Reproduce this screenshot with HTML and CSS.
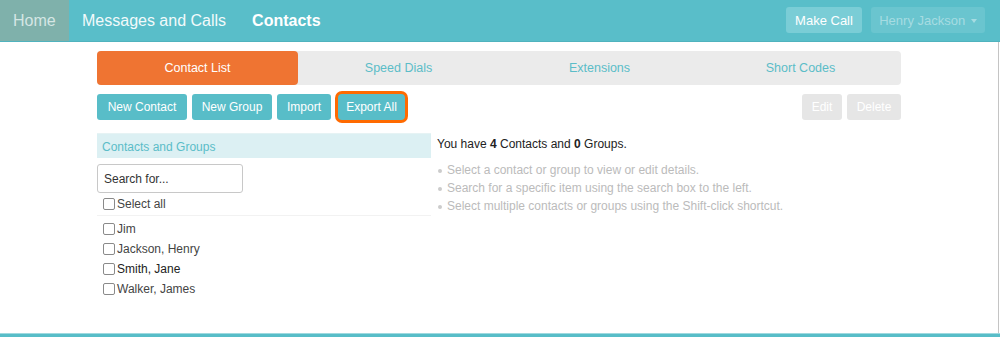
FILE: index.html
```html
<!DOCTYPE html>
<html>
<head>
<meta charset="utf-8">
<link rel="stylesheet" href="styles.css">
</head>
<body>
<header class="navbar">
  <a class="nav-home">Home</a>
  <a class="nav-link">Messages and Calls</a>
  <a class="nav-link nav-active">Contacts</a>
  <div class="nav-right">
    <button class="nav-btn nav-call">Make Call</button>
    <button class="nav-btn nav-user">Henry Jackson <span class="caret"></span></button>
  </div>
</header>
<div class="page">
  <main class="container">
    <nav class="tabs">
      <div class="tab tab-active">Contact List</div>
      <div class="tab">Speed Dials</div>
      <div class="tab">Extensions</div>
      <div class="tab">Short Codes</div>
    </nav>
    <div class="toolbar">
      <div class="tool-left">
        <button class="btn w-new-contact">New Contact</button>
        <button class="btn w-new-group">New Group</button>
        <button class="btn w-import">Import</button>
        <button class="btn btn-hl">Export All</button>
      </div>
      <div class="tool-right">
        <button class="btn btn-dis w-edit">Edit</button>
        <button class="btn btn-dis w-delete">Delete</button>
      </div>
    </div>
    <div class="cols">
      <section class="left">
        <div class="left-head">Contacts and Groups</div>
        <div class="search">Search for...</div>
        <label class="row select-all"><span class="cb"></span>Select all</label>
        <ul class="list">
          <li class="row"><span class="cb"></span>Jim</li>
          <li class="row"><span class="cb"></span>Jackson, Henry</li>
          <li class="row dark"><span class="cb"></span>Smith, Jane</li>
          <li class="row"><span class="cb"></span>Walker, James</li>
        </ul>
      </section>
      <section class="right">
        <p class="summary">You have <b>4</b> Contacts and <b>0</b> Groups.</p>
        <ul class="hints">
          <li>Select a contact or group to view or edit details.</li>
          <li>Search for a specific item using the search box to the left.</li>
          <li>Select multiple contacts or groups using the Shift-click shortcut.</li>
        </ul>
      </section>
    </div>
  </main>
</div>
<footer class="footbar"></footer>
</body>
</html>
```
FILE: styles.css
```css
* { box-sizing: border-box; }
html, body { margin: 0; padding: 0; }
body {
  font-family: "Liberation Sans", Arial, sans-serif;
  color: #333;
  background: #fff;
  width: 1000px;
  height: 337px;
  overflow: hidden;
  display: flex;
  flex-direction: column;
}
.navbar {
  height: 42px;
  background: #59bec9;
  border-bottom: 1px solid #50b3be;
  display: flex;
  align-items: stretch;
  flex: none;
}
.nav-home {
  width: 69px;
  background: #7fb1ab;
  color: #d5e6e4;
  font-size: 16px;
  padding-left: 13px;
  display: flex;
  align-items: center;
}
.nav-link {
  color: #f2fafb;
  font-size: 16px;
  display: flex;
  align-items: center;
  padding-left: 13px;
  margin-right: 13px;
}
.nav-active { font-weight: bold; color: #fff; }
.nav-right {
  margin-left: auto;
  display: flex;
  align-items: center;
  gap: 9px;
  padding-right: 15px;
  padding-bottom: 1px;
}
.nav-btn {
  font-family: inherit;
  border: none;
  border-radius: 3px;
  height: 26px;
  font-size: 13px;
  padding: 0;
  white-space: nowrap;
}
.nav-call { background: #7acdd6; color: #fff; width: 76px; }
.nav-user { background: #6ac5cf; color: #a6dce2; width: 114px; }
.caret {
  display: inline-block;
  width: 0; height: 0;
  border-left: 3.5px solid transparent;
  border-right: 3.5px solid transparent;
  border-top: 4px solid #a6dce2;
  vertical-align: middle;
  margin-left: 2px;
}
.page {
  flex: 1;
  width: 999px;
  border-right: 1px solid #c4c4c4;
}
.container {
  margin-left: 97px;
  width: 804px;
  padding-top: 9px;
}
.tabs {
  display: grid;
  grid-template-columns: repeat(4, 1fr);
  background: #ebebeb;
  border-radius: 4px;
  height: 34px;
}
.tab {
  display: flex;
  align-items: center;
  justify-content: center;
  font-size: 12.5px;
  color: #5bbdc8;
}
.tab-active {
  background: #ef7432;
  color: #fff;
  border-radius: 4px;
}
.toolbar {
  display: flex;
  justify-content: space-between;
  margin-top: 9px;
}
.tool-left, .tool-right { display: flex; gap: 5px; }
.btn {
  font-family: inherit;
  height: 26px;
  border: none;
  border-radius: 3px;
  background: #58bdc8;
  color: #fff;
  font-size: 12px;
  padding: 0;
  white-space: nowrap;
}
.w-new-contact { width: 90px; }
.w-new-group { width: 80px; }
.w-import { width: 54px; }
.w-edit { width: 40px; }
.w-delete { width: 54px; }
.btn-hl {
  margin-left: 2px;
  box-shadow: 0 0 0 3px #ff6a00;
  border-radius: 4px;
  width: 67px;
}
.btn-dis { background: #e6e6e6; color: #fff; }
.cols {
  display: flex;
  gap: 6px;
  margin-top: 13px;
}
.left {
  width: 334px;
  border-top: 1px solid #e6f3f4;
}
.left-head {
  height: 24px;
  background: #dcf0f3;
  color: #5bbdc8;
  font-size: 12px;
  padding-left: 5px;
  padding-top: 1px;
  display: flex;
  align-items: center;
}
.search {
  margin-top: 6px;
  width: 146px;
  height: 29px;
  border: 1px solid #c8c8c8;
  border-radius: 3px;
  font-size: 12px;
  color: #333;
  padding-left: 6px;
  display: flex;
  align-items: center;
}
.row {
  display: flex;
  align-items: center;
  height: 20px;
  font-size: 12px;
  color: #444;
  padding-left: 6px;
}
.row.dark { color: #222; }
.select-all {
  border-bottom: 1px solid #f2f2f2;
  padding-bottom: 1px;
  height: 23px;
}
.cb {
  width: 12px;
  height: 12px;
  border: 1px solid #8a8a8a;
  border-radius: 2px;
  background: #fff;
  margin-right: 2px;
  flex: none;
}
.list {
  list-style: none;
  margin: 0;
  padding: 3px 0 0 0;
}
.right {
  font-size: 12px;
  padding-top: 2px;
}
.summary {
  margin: 0;
  color: #222;
  height: 18px;
  line-height: 18px;
}
.summary b { font-weight: bold; }
.hints {
  margin: 8px 0 0 0;
  padding: 0;
  list-style: none;
  color: #bbb;
}
.hints li {
  line-height: 18px;
  position: relative;
  padding-left: 10px;
}
.hints li::before {
  content: "";
  position: absolute;
  left: 1px;
  top: 8px;
  width: 4px;
  height: 4px;
  border-radius: 50%;
  background: #ccc;
}
.footbar {
  flex: none;
  height: 4px;
  background: #58bdc8;
  border-top: 1px solid #9fd9df;
}
```
